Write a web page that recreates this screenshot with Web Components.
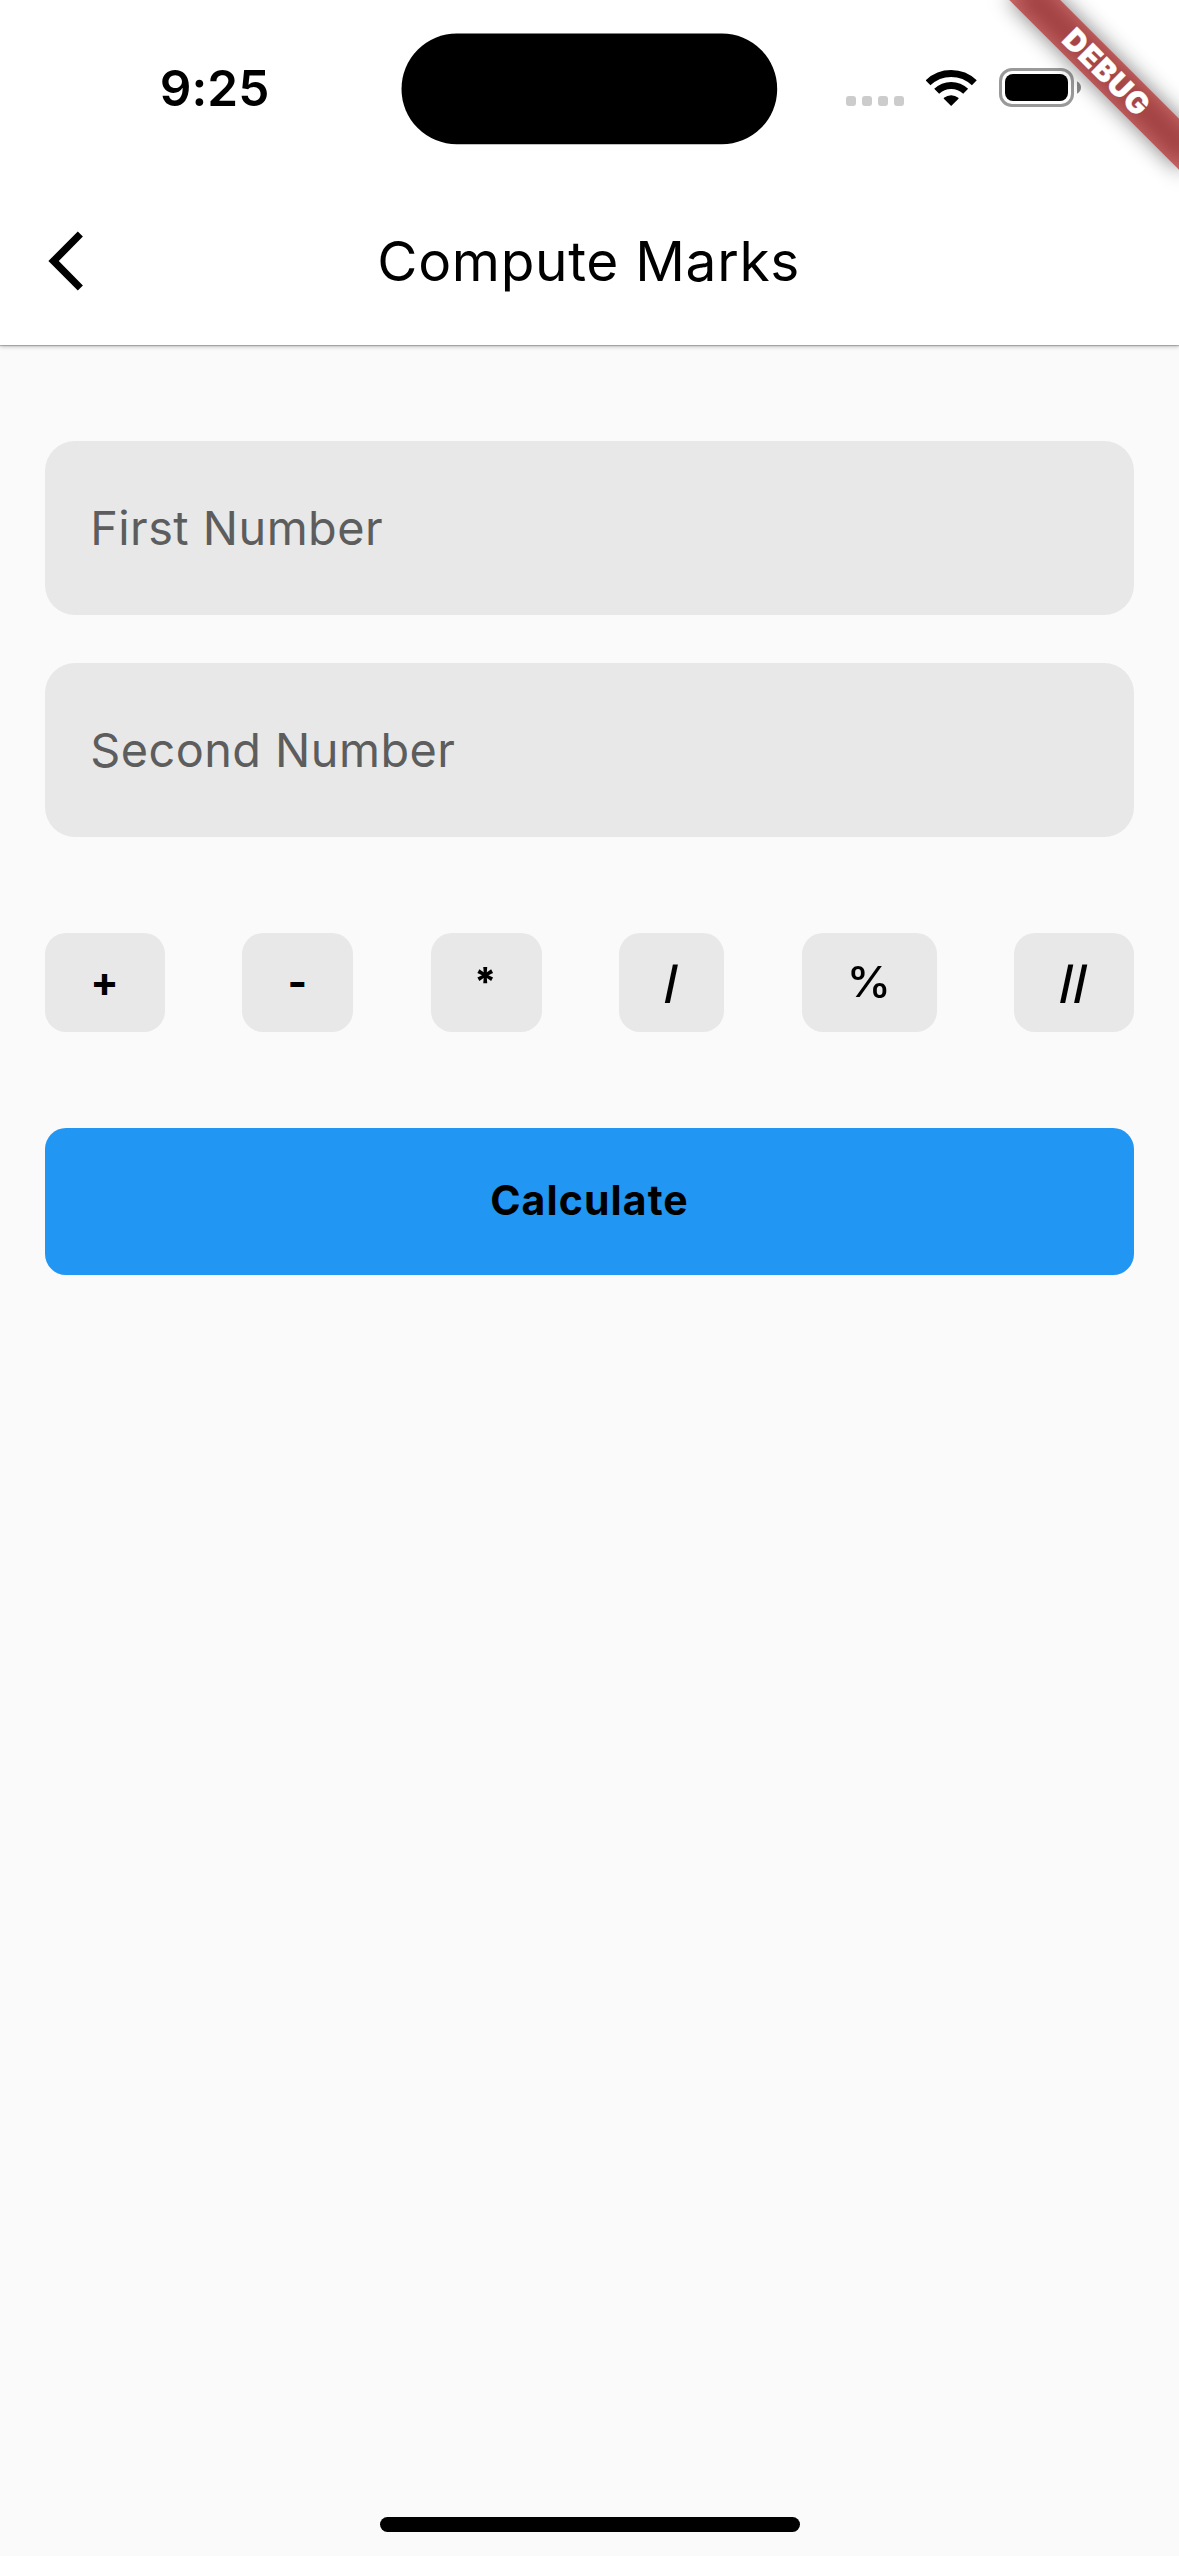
<!DOCTYPE html>
<html lang="en">
<head>
<meta charset="utf-8">
<title>Compute Marks</title>
<style>
  html, body { margin: 0; padding: 0; }
  body { width: 1179px; height: 2556px; overflow: hidden; background: #fafafa; color: #000; font-family: Inter, "Liberation Sans", sans-serif; }
</style>
</head>
<body>
<marks-app></marks-app>
<script>
const define = (name, markup) => {
  const template = document.createElement('template');
  template.innerHTML = markup;
  customElements.define(name, class extends HTMLElement {
    constructor() {
      super();
      this.attachShadow({ mode: 'open' }).appendChild(template.content.cloneNode(true));
    }
  });
};

define('status-bar', `
<style>
  :host { display: grid; grid-template-columns: 401.5px 376px 1fr; height: 177px; box-sizing: border-box; }
  .time { height: 176px; line-height: 176px; padding-left: 159.7px; font-size: 49.5px; font-weight: 600; letter-spacing: .1px; white-space: nowrap; }
  .island { display: block; margin: 33px 0 0 -.5px; }
  .icons { display: flex; align-items: flex-start; padding: 68px 0 0 68.5px; }
  svg { display: block; flex: none; }
</style>
<div class="time">9:25</div>
<svg class="island" width="377" height="112" viewBox="0 0 377 112"><rect x=".5" y=".6" width="375.700" height="110.700" rx="55.350"/></svg>
<div class="icons">
  <svg width="80" height="39" viewBox="0 0 80 39" fill="#ccc">
    <rect x="0" y="28" width="10" height="10" rx="3"/><rect x="16" y="28" width="10" height="10" rx="3"/>
    <rect x="32" y="28" width="10" height="10" rx="3"/><rect x="48" y="28" width="10" height="10" rx="3"/>
  </svg>
  <svg width="73" height="39" viewBox="0 0 219 117">
    <g fill="none" stroke="#000">
      <path d="M6 44.500A100 100 0 0 1 145 44.500" stroke-width="21"/>
      <path d="M32 70A62 62 0 0 1 119 70" stroke-width="21"/>
    </g>
    <path d="M75.500 114L53.500 92Q52.500 90.500 54 89.300A34 34 0 0 1 97 89.300Q98.500 90.500 97.500 92Z"/>
  </svg>
  <svg width="84" height="39" viewBox="0 0 84 39">
    <rect x="1.500" y="1.500" width="72" height="36" rx="11.500" fill="none" stroke="#999" stroke-width="3"/>
    <rect x="6" y="6" width="63" height="27" rx="8" fill="#000"/>
    <path d="M78 13.300Q82 15.500 82 19.500T78 25.700Z" fill="#888"/>
  </svg>
</div>`);

define('app-bar', `
<style>
  :host { display: grid; grid-template-columns: 377.3px 1fr; align-items: center; height: 168px; }
  svg { display: block; margin-left: 48px; }
  .title { font-size: 55px; line-height: 168px; letter-spacing: .68px; white-space: nowrap; }
</style>
<svg width="36" height="60" viewBox="0 0 36 60"><path d="M.4 30L29.800 .5L34.900 5.600L10.800 30L34.900 54.400L29.800 59.500Z"/></svg>
<div class="title"><slot></slot></div>`);

define('number-field', `
<style>
  :host { display: block; height: 174px; line-height: 174px; box-sizing: border-box; padding-left: 45.2px; border-radius: 30px; background: #e8e8e8; color: #5d5d5d; font-size: 46.8px; letter-spacing: .47px; white-space: nowrap; }
</style>
<slot></slot>`);

define('operator-button', `
<style>
  :host { display: flex; justify-content: center; width: var(--w, 120px); height: 99px; box-sizing: border-box; padding-right: 1.2px; border-radius: 21px; background: #e8e8e8; font-size: 42px; font-weight: var(--weight, 700); line-height: 98px; }
  span { display: block; transform: scale(var(--sx, 1), var(--sy, 1)); transform-origin: 50% 44px; }
</style>
<span><slot></slot></span>`);

define('calculate-button', `
<style>
  :host { display: block; height: 147px; line-height: 144px; border-radius: 21px; background: #2196f3; font-size: 41px; font-weight: 700; letter-spacing: 1.1px; text-align: center; }
</style>
<slot></slot>`);

define('debug-banner', `
<style>
  :host { position: absolute; top: 0; right: 0; width: 400px; height: 400px; overflow: hidden; }
  .turn { position: absolute; left: 400px; top: 0; transform: rotate(45deg); transform-origin: 0 0; }
  .shade, .band { position: absolute; left: -120px; top: 84px; width: 240px; height: 36px; }
  .shade { background: rgba(0,0,0,.5); filter: blur(10.9px); }
  .band { background: rgba(183,28,28,.627); color: #fff; font-size: 30px; font-weight: 900; line-height: 36px; letter-spacing: 1px; text-align: center; -webkit-text-stroke: .3px #fff; }
</style>
<div class="turn"><div class="shade"></div><div class="band">DEBUG</div></div>`);

define('marks-app', `
<style>
  :host { display: flex; flex-direction: column; position: relative; width: 1179px; height: 2556px; background: #fafafa; }
  header { height: 345px; background: #fff; box-shadow: 0 1px 1px rgba(0,0,0,.22), 0 2px 4px rgba(0,0,0,.2); }
  main { flex: 1; display: flex; flex-direction: column; padding: 96px 45px 0; }
  .fields { display: flex; flex-direction: column; gap: 48px; }
  .ops { display: flex; justify-content: space-between; margin: 96px 0; }
  .home { align-self: center; width: 420px; height: 15px; margin-bottom: 24px; border-radius: 7.5px; background: #000; }
</style>
<header>
  <status-bar></status-bar>
  <app-bar>Compute Marks</app-bar>
</header>
<main>
  <div class="fields">
    <number-field>First Number</number-field>
    <number-field>Second Number</number-field>
  </div>
  <div class="ops">
    <operator-button>+</operator-button>
    <operator-button style="--w:111px">-</operator-button>
    <operator-button style="--w:111px;--sx:.92;--sy:.95;--weight:800">*</operator-button>
    <operator-button style="--w:105px;--sx:.82;--sy:1.05;--weight:800">/</operator-button>
    <operator-button style="--w:135px;--sx:1.06;--weight:550">%</operator-button>
    <operator-button style="--sx:.83;--sy:1.05;--weight:800">//</operator-button>
  </div>
  <calculate-button>Calculate</calculate-button>
</main>
<div class="home"></div>
<debug-banner></debug-banner>`);
</script>
</body>
</html>
